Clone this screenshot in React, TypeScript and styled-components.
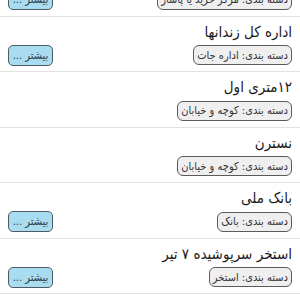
import React from "react";
import styled, { createGlobalStyle } from "styled-components";

const Global = createGlobalStyle`
  html, body { margin: 0; padding: 0; background: #fff; }
  body { font-family: "DejaVu Sans Condensed", "DejaVu Sans", sans-serif; }
`;

const Viewport = styled.div`
  width: 300px;
  height: 300px;
  overflow: hidden;
  background: #fff;
`;

const List = styled.div`
  direction: rtl;
  margin-top: -39px;
`;

const Row = styled.div`
  padding: 5px 8px 5.5px 8px;
  border-bottom: 1px solid #e2e2e2;
  display: flex;
  flex-direction: column;
  gap: 3px;
`;

const Title = styled.div`
  font-size: 15px;
  line-height: 20px;
  height: 20px;
  color: #1a1a1a;
  white-space: nowrap;
`;

const Meta = styled.div`
  display: flex;
  justify-content: space-between;
  align-items: center;
  height: 21px;
`;

const Chip = styled.span`
  display: inline-flex;
  align-items: center;
  box-sizing: border-box;
  height: 20px;
  padding: 0 3px;
  border: 1px solid #5a5a5a;
  border-radius: 6px;
  background: #efefef;
  color: #333;
  font-size: 11px;
  white-space: nowrap;
`;

const MoreButton = styled.span`
  display: inline-flex;
  align-items: center;
  justify-content: center;
  box-sizing: border-box;
  width: 45px;
  height: 21px;
  border: 1px solid #4e5a64;
  border-radius: 5px;
  background: #a9dcf0;
  color: #2a3a44;
  font-size: 11px;
  white-space: nowrap;
`;

type Item = { title: string; category: string; more: boolean };

const items: Item[] = [
  { title: "پاساژ", category: "مرکز خرید یا پاساژ", more: true },
  { title: "اداره کل زندانها", category: "اداره جات", more: true },
  { title: "۱۲متری اول", category: "کوچه و خیابان", more: false },
  { title: "نسترن", category: "کوچه و خیابان", more: false },
  { title: "بانک ملی", category: "بانک", more: true },
  { title: "استخر سرپوشیده ۷ تیر", category: "استخر", more: true },
  { title: "فرهنگسرای گلستان الزهرا", category: "فرهنگسرا", more: true },
];

export default function App() {
  return (
    <Viewport>
      <Global />
      <List>
        {items.map((it, i) => (
          <Row key={i}>
            <Title>{it.title}</Title>
            <Meta>
              <Chip>دسته بندی: {it.category}</Chip>
              {it.more && <MoreButton>بیشتر ...</MoreButton>}
            </Meta>
          </Row>
        ))}
      </List>
    </Viewport>
  );
}
